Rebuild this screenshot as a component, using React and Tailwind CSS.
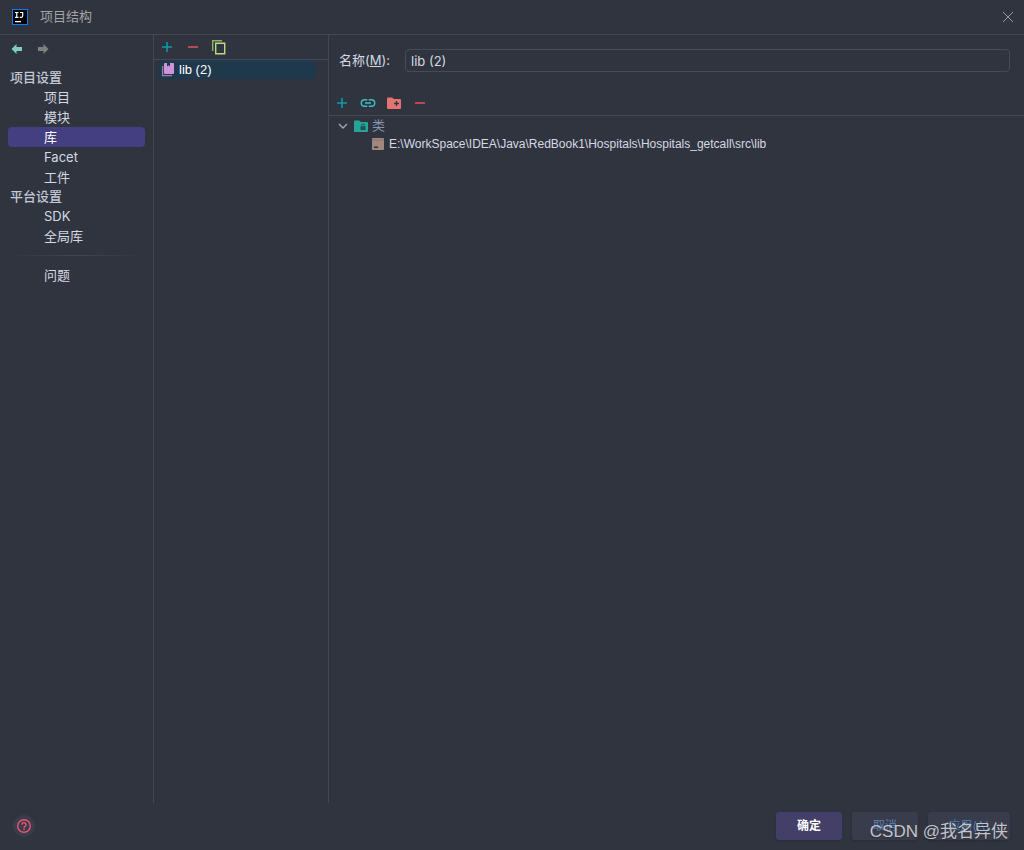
import React, { useState } from "react";

const projectItems = ["项目", "模块", "库", "Facet", "工件"];
const platformItems = ["SDK", "全局库"];

function PlusIcon() {
  return (
    <svg width="16" height="16" viewBox="0 0 16 16" fill="none">
      <path d="M8 3v10M3 8h10" stroke="#0c9aab" strokeWidth="1.6" />
    </svg>
  );
}

function MinusIcon() {
  return (
    <svg width="16" height="16" viewBox="0 0 16 16">
      <path d="M3 7h10v2H3z" fill="#b34b52" />
    </svg>
  );
}

function CopyIcon() {
  return (
    <svg width="16" height="16" viewBox="0 0 16 16" fill="none">
      <path d="M1.7 12V1.7H11" stroke="#8fae68" strokeWidth="1.5" />
      <path d="M4.700 4.200h9v10.600h-9z" stroke="#b5dc80" strokeWidth="1.4" />
    </svg>
  );
}

function LibraryIcon() {
  return (
    <svg width="16" height="16" viewBox="0 0 16 16" fill="none">
      <path d="M2.600 4v9.600H12" stroke="#a17bb0" strokeWidth="1.300" />
      <path
        d="M5 1h2v3.500l1.500-1.200L10 4.500V1h3a1 1 0 0 1 1 1v9a1 1 0 0 1-1 1H5a1 1 0 0 1-1-1V2a1 1 0 0 1 1-1z"
        fill="#ce93d8"
      />
    </svg>
  );
}

function LinkIcon() {
  return (
    <svg width="16" height="16" viewBox="0 0 16 16" fill="none">
      <path
        d="M7.3 4.7H4.6a3.3 3.3 0 0 0 0 6.6h2.7M8.7 4.7h2.7a3.3 3.3 0 0 1 0 6.6H8.7M5 8h6"
        stroke="#3fbccb"
        strokeWidth="1.4"
      />
    </svg>
  );
}

function FolderPlusIcon() {
  return (
    <svg width="16" height="16" viewBox="0 0 16 16" fill="none">
      <path
        d="M2 2.5h4.3l1.5 1.5H14a1 1 0 0 1 1 1v8a1 1 0 0 1-1 1H2a1 1 0 0 1-1-1V3.5a1 1 0 0 1 1-1z"
        fill="#e57373"
      />
      <path d="M10.500 6v5M8 8.500h5" stroke="#30343f" strokeWidth="1.300" />
    </svg>
  );
}

function ClassesIcon() {
  return (
    <svg width="16" height="16" viewBox="0 0 16 16" fill="none">
      <path
        d="M2 2.5h4.3l1.5 1.5H14a1 1 0 0 1 1 1v8a1 1 0 0 1-1 1H2a1 1 0 0 1-1-1V3.5a1 1 0 0 1 1-1z"
        fill="#26a69a"
      />
      <path d="M7.500 8.300h5V12h-5z" fill="#244f55" />
      <path d="M8.600 8.500V7.400a1.400 1.400 0 0 1 2.800 0v1.100" stroke="#244f55" />
    </svg>
  );
}

function ArchiveIcon() {
  return (
    <svg width="16" height="16" viewBox="0 0 16 16">
      <rect x="2" y="2" width="12" height="12" rx="1" fill="#a1887f" />
      <path d="M2 4h12" stroke="#8a736c" />
      <path d="M4 10.500h4V12H4z" fill="#30343f" />
    </svg>
  );
}

function ArrowIcon({ color, forward }) {
  return (
    <svg width="12" height="12" viewBox="0 0 12 12">
      <path
        d={forward ? "M11.5 6 6.5 1v3H1v4h5.5v3z" : "M.5 6 5.5 1v3H11v4H5.5v3z"}
        fill={color}
      />
    </svg>
  );
}

function NavItem({ label, active, onSelect }) {
  return (
    <button
      onClick={() => onSelect(label)}
      className={
        active
          ? "block h-5 w-full rounded bg-[#433f80] pl-9 text-left text-[13px] leading-5 text-white"
          : "block h-5 w-full rounded pl-9 text-left text-[13px] leading-5 text-[#d5d9e3]"
      }
    >
      {label}
    </button>
  );
}

function App() {
  const [selected, setSelected] = useState("库");
  const [name, setName] = useState("lib (2)");

  return (
    <div className="relative flex min-h-screen flex-col bg-[#30343f] font-['Inter','Noto_Sans_CJK_SC',sans-serif] text-[13px] text-[#d5d9e3]">
      <header className="flex h-[35px] items-center border-b border-[#434754] pr-2.5 pl-3">
        <svg width="16" height="16" viewBox="0 0 16 16">
          <path d="M0 0h16v16H0z" fill="#087cfa" />
          <path d="M1 1h14v14H1z" fill="#000" />
          <path
            d="M3 3.5h3.500M4.750 3.500v4.500M3 8.300h3.500M8 3.500h3.200M10.700 3.500v3.300q0 1.500-1.400 1.500H7.700M3 12.600h6"
            fill="none"
            stroke="#fff"
            strokeWidth="1.2"
          />
        </svg>
        <h1 className="ml-3 flex-1 text-[#a3a4a6]">项目结构</h1>
        <button aria-label="关闭">
          <svg width="12" height="12" viewBox="0 0 12 12" fill="none">
            <path d="m1 1 10 10M11 1 1 11" stroke="#969aa3" />
          </svg>
        </button>
      </header>

      <main className="flex flex-1">
        <nav className="w-[154px] shrink-0 border-r border-[#434754] px-2">
          <div className="flex h-8 items-start gap-3.5 pt-2 pl-[3px]">
            <button aria-label="后退">
              <ArrowIcon color="#80cbc4" />
            </button>
            <button aria-label="前进">
              <ArrowIcon color="#808080" forward />
            </button>
          </div>
          <h2 className="h-5 pl-0.5 leading-5 font-medium text-[#c4c9d6]">
            项目设置
          </h2>
          {projectItems.map((item) => (
            <NavItem
              key={item}
              label={item}
              active={item === selected}
              onSelect={setSelected}
            />
          ))}
          <h2 className="h-[19px] pl-0.5 leading-[19px] font-medium text-[#c4c9d6]">
            平台设置
          </h2>
          {platformItems.map((item) => (
            <NavItem
              key={item}
              label={item}
              active={item === selected}
              onSelect={setSelected}
            />
          ))}
          <div className="my-[9px] h-px bg-linear-to-r from-transparent via-[#434754] to-transparent" />
          <NavItem
            label="问题"
            active={selected === "问题"}
            onSelect={setSelected}
          />
        </nav>

        <section className="w-[175px] shrink-0 border-r border-[#434754]">
          <div className="flex h-[25px] items-center gap-2.5 border-b border-[#434754] pl-[5px]">
            <button aria-label="添加">
              <PlusIcon />
            </button>
            <button aria-label="移除">
              <MinusIcon />
            </button>
            <button aria-label="复制">
              <CopyIcon />
            </button>
          </div>
          <button className="ml-1 flex h-[19px] w-[158px] items-center gap-[3px] rounded-sm bg-[#20384b] pl-0.5 font-['Liberation_Sans',sans-serif] text-white">
            <LibraryIcon />
            <span>lib (2)</span>
          </button>
        </section>

        <section className="min-w-0 flex-1">
          <div className="flex h-[55px] items-end pr-3.5 pl-2.5">
            <div className="flex w-full items-center pb-[18px]">
              <label htmlFor="name" className="w-[66px] shrink-0">
                名称(<u>M</u>):
              </label>
              <input
                id="name"
                value={name}
                onChange={(e) => setName(e.target.value)}
                className="h-[23px] min-w-0 flex-1 rounded border border-[#474b59] bg-transparent px-[5px] outline-none"
              />
            </div>
          </div>
          <div className="flex h-[26px] items-center gap-2.5 border-b border-[#434754] pl-[5px]">
            <button aria-label="添加">
              <PlusIcon />
            </button>
            <button aria-label="指定文档 URL">
              <LinkIcon />
            </button>
            <button aria-label="排除">
              <FolderPlusIcon />
            </button>
            <button aria-label="移除">
              <MinusIcon />
            </button>
          </div>
          <ul>
            <li className="flex h-[19px] items-center pl-2 text-[#8796b0]">
              <svg width="12" height="12" viewBox="0 0 12 12" fill="none">
                <path d="m2 4 4 4 4-4" stroke="#9aa7bd" strokeWidth="1.4" />
              </svg>
              <span className="mr-[3px] ml-1">
                <ClassesIcon />
              </span>
              类
            </li>
            <li className="flex h-[18px] items-center gap-px pl-[41px] font-['Liberation_Sans',sans-serif] text-xs text-[#d5d9e3]">
              <span className="mr-0.5">
                <ArchiveIcon />
              </span>
              E:\WorkSpace\IDEA\Java\RedBook1\Hospitals\Hospitals_getcall\src\lib
            </li>
          </ul>
        </section>
      </main>

      <footer className="flex h-[47px] items-center gap-2.5 pr-3.5 pb-px pl-[13px]">
        <button
          aria-label="帮助"
          className="flex size-[22px] items-center justify-center rounded-full bg-[#393c4b]"
        >
          <svg width="16" height="16" viewBox="0 0 16 16" fill="none">
            <circle cx="8" cy="8" r="6.3" stroke="#ef5370" strokeWidth="1.4" />
            <path
              d="M6 6.700a2 2 0 1 1 3.200 1.500C8.400 8.800 8 9 8 10M8 10.800v1.200"
              stroke="#ef5370"
              strokeWidth="1.400"
            />
          </svg>
        </button>
        <button className="ml-auto h-7 w-[66px] rounded-[3px] bg-[#433f68] text-xs font-bold text-white shadow">
          确定
        </button>
        <button className="h-7 w-[66px] rounded-[3px] bg-[#393c4b] text-xs text-[#5980b0] shadow">
          取消
        </button>
        <button className="h-7 w-[82px] rounded-[3px] bg-[#393c4b] text-xs text-[#4a76a8] shadow">
          应用(A)
        </button>
      </footer>

      <div className="pointer-events-none absolute right-4 bottom-1.5 font-['Liberation_Sans','Noto_Sans_CJK_SC',sans-serif] text-[17px] text-[#c2c4c8] text-shadow-sm">
        CSDN @我名异侠
      </div>
    </div>
  );
}

export default App;
